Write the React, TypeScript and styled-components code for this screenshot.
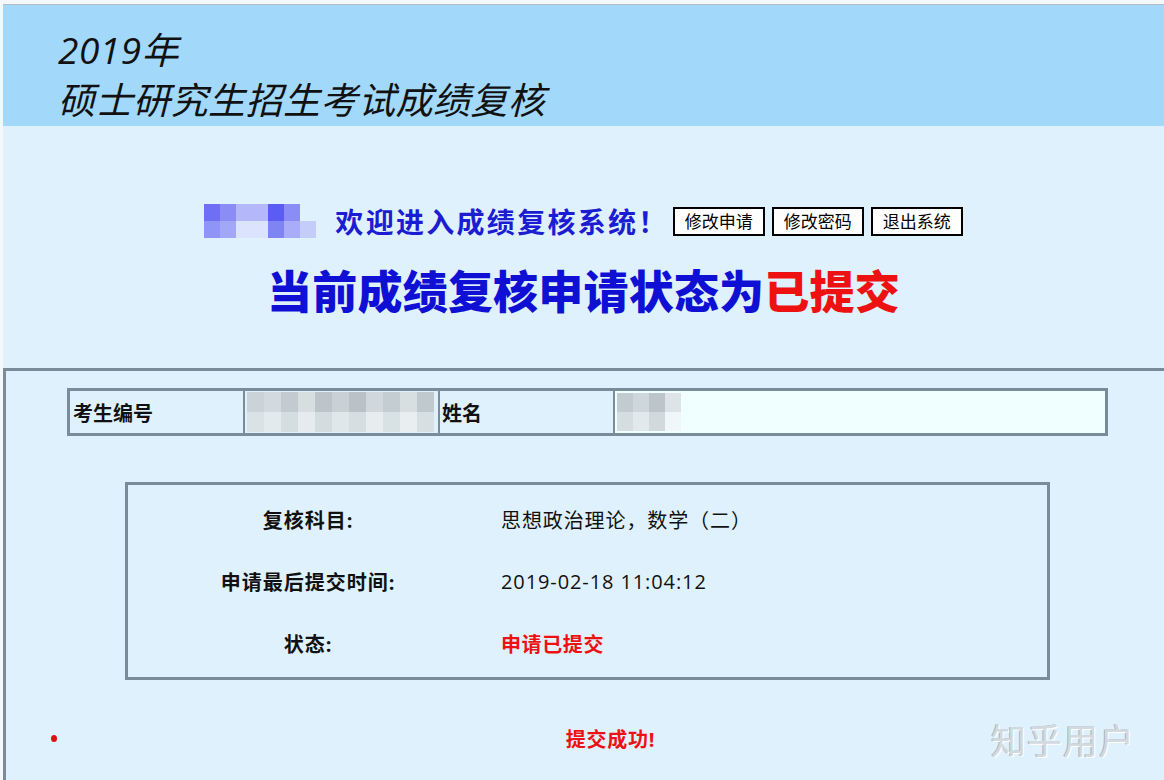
import React from "react";
import styled, { createGlobalStyle } from "styled-components";

const GlobalStyle = createGlobalStyle`
  html, body {
    margin: 0;
    padding: 0;
    background: #f3f8fb;
  }
  body {
    font-family: "Open Sans", "Noto Sans CJK SC", sans-serif;
    color: #111;
  }
`;

const nameMosaic = [
  ["#6f6ff5", "#8c8cf7", "#b4b8fa", "#b4b8fa", "#5a5cf4", "#8c8cf7", "transparent"],
  ["#8f95f7", "#a3a7f8", "#dbe4fc", "#dbe4fc", "#7f84f5", "#a9acf8", "#c4ccf9"],
];

const idMosaic = [
  ["#c9d3d8", "#d2dadd", "#c2ccd0", "#d6dee0", "#bcc6ca", "#c9d1d4", "#b9c3c7", "#d0d8db", "#c4cdd1", "#d7dfe1", "#c0c9cd"],
  ["#d9e2e5", "#e3eaec", "#d4dde0", "#e6eced", "#d3dcdf", "#e0e7e9", "#d5dee1", "#e7edee", "#d8e1e3", "#e9eff0", "#d6dfe2"],
];

const nameValueMosaic = [
  ["#c2ccd0", "#ced7da", "#bcc6ca", "#dce4e6", "transparent"],
  ["#d4dde0", "#e2e9eb", "#d0d9dc", "#f0f7f8", "transparent"],
];

const Frame = styled.div`
  margin-top: 4px;
  margin-left: 3px;
  border-top: 1px solid #b3bcc4;
  background: #dff1fd;
  height: 775px;
  overflow: hidden;
`;

const Header = styled.header`
  box-sizing: border-box;
  height: 121px;
  background: #a2d8fa;
  padding: 20px 0 0 55px;
  font-style: italic;
  font-size: 37px;
  line-height: 50px;
  letter-spacing: 0.5px;
  color: #111;
`;

const Intro = styled.section`
  height: 242px;
  display: flex;
  flex-direction: column;
  align-items: center;
`;

const WelcomeRow = styled.div`
  margin-top: 78px;
  display: flex;
  align-items: center;
  height: 34px;
`;

const Welcome = styled.span`
  font-size: 28px;
  font-weight: 700;
  color: #1c1cd2;
  margin: 0 4px 0 19px;
  letter-spacing: 2.3px;
`;

const Buttons = styled.div`
  display: flex;
  gap: 7px;
`;

const Button = styled.button`
  font-family: "Noto Sans CJK SC", sans-serif;
  font-size: 17px;
  line-height: 22px;
  padding: 1px 10px 2px;
  background: #fff;
  color: #000;
  border: 2px solid #000;
  cursor: pointer;
`;

const Status = styled.h1`
  margin: 23px 0 0 0;
  font-size: 45px;
  line-height: 62px;
  font-weight: 900;
  color: #1010d4;
  letter-spacing: 0.2px;
`;

const Red = styled.span`
  color: #ee1111;
`;

const MosaicGrid = styled.div<{ $cols: number; $cell: number; $h: number }>`
  display: grid;
  grid-template-columns: repeat(${(p) => p.$cols}, ${(p) => p.$cell}px);
  grid-auto-rows: ${(p) => p.$h}px;
  filter: blur(0.6px);
`;

const MosaicCell = styled.div<{ $c: string }>`
  background: ${(p) => p.$c};
`;

const Main = styled.section`
  border-top: 3px solid #7a8c9a;
  border-left: 3px solid #7a8c9a;
  border-bottom: 3px solid #7a8c9a;
  height: 404px;
  padding-top: 17px;
  display: flex;
  flex-direction: column;
`;

const InfoTable = styled.div`
  margin-left: 61px;
  width: 1041px;
  box-sizing: border-box;
  height: 48px;
  border: 3px solid #7a8c9a;
  display: grid;
  grid-template-columns: 173px 195px 175px 1fr;
`;

const InfoCell = styled.div<{ $light?: boolean; $first?: boolean }>`
  display: flex;
  align-items: center;
  padding-left: ${(p) => (p.$first ? "3px" : "2px")};
  border-left: ${(p) => (p.$first ? "none" : "2px solid #7a8c9a")};
  background: ${(p) => (p.$light ? "#f0ffff" : "transparent")};
  font-size: 20px;
  font-weight: 700;
`;

const DetailBox = styled.div`
  margin: 46px 0 0 119px;
  width: 925px;
  height: 198px;
  box-sizing: border-box;
  border: 3px solid #7a8c9a;
  padding-top: 3px;
  display: grid;
  grid-template-columns: 360px 1fr;
  grid-auto-rows: 62px;
`;

const Label = styled.div`
  display: flex;
  align-items: center;
  justify-content: center;
  font-size: 20px;
  font-weight: 700;
  letter-spacing: 1px;
`;

const Value = styled.div<{ $red?: boolean }>`
  display: flex;
  align-items: center;
  padding-left: 13px;
  font-size: 20px;
  letter-spacing: ${(p) => (p.$red ? "0.6px" : "0.9px")};
  font-weight: ${(p) => (p.$red ? 700 : 400)};
  color: ${(p) => (p.$red ? "#ee1111" : "#111")};
`;

const Notice = styled.div`
  flex: 1;
  display: flex;
  align-items: center;
  padding-top: 4px;
  position: relative;
`;

const Dot = styled.span`
  width: 6px;
  height: 7px;
  border-radius: 50%;
  background: #e01010;
  margin-left: 45px;
`;

const NoticeText = styled.span`
  flex: 1;
  text-align: center;
  font-size: 20px;
  font-weight: 700;
  color: #ee1111;
  letter-spacing: 0.8px;
`;

const Watermark = styled.span`
  position: absolute;
  right: 29px;
  top: 50%;
  transform: translateY(-46%);
  font-family: "Noto Sans CJK SC", sans-serif;
  font-size: 35px;
  color: #d3dadf;
  text-shadow: 1px 1px 0 #ffffff, -1px 0 0 #a9b3bb;
  letter-spacing: 1px;
`;

function Mosaic({ rows, cell, h }: { rows: string[][]; cell: number; h: number }) {
  return (
    <MosaicGrid $cols={rows[0].length} $cell={cell} $h={h}>
      {rows.flat().map((c, i) => (
        <MosaicCell key={i} $c={c} />
      ))}
    </MosaicGrid>
  );
}

export default function App() {
  return (
    <>
      <GlobalStyle />
      <Frame>
        <Header>
          <div>2019年</div>
          <div>硕士研究生招生考试成绩复核</div>
        </Header>
        <Intro>
          <WelcomeRow>
            <Mosaic rows={nameMosaic} cell={16} h={17} />
            <Welcome>欢迎进入成绩复核系统！</Welcome>
            <Buttons>
              <Button>修改申请</Button>
              <Button>修改密码</Button>
              <Button>退出系统</Button>
            </Buttons>
          </WelcomeRow>
          <Status>
            当前成绩复核申请状态为<Red>已提交</Red>
          </Status>
        </Intro>
        <Main>
          <InfoTable>
            <InfoCell $first>考生编号</InfoCell>
            <InfoCell>
              <Mosaic rows={idMosaic} cell={17} h={20} />
            </InfoCell>
            <InfoCell>姓名</InfoCell>
            <InfoCell $light>
              <Mosaic rows={nameValueMosaic} cell={16} h={19} />
            </InfoCell>
          </InfoTable>
          <DetailBox>
            <Label>复核科目:</Label>
            <Value>思想政治理论，数学（二）</Value>
            <Label>申请最后提交时间:</Label>
            <Value>2019-02-18 11:04:12</Value>
            <Label>状态:</Label>
            <Value $red>申请已提交</Value>
          </DetailBox>
          <Notice>
            <Dot />
            <NoticeText>提交成功!</NoticeText>
            <Watermark>知乎用户</Watermark>
          </Notice>
        </Main>
      </Frame>
    </>
  );
}
